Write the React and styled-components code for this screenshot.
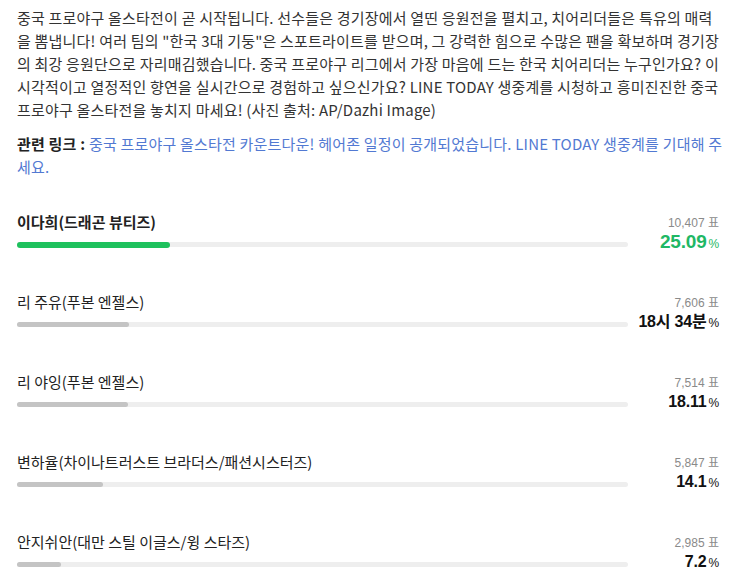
import React from "react";
import styled, { createGlobalStyle } from "styled-components";

const Global = createGlobalStyle`
  html, body { margin: 0; padding: 0; background: #fff; }
  body { font-family: "Noto Sans CJK KR", "Noto Sans", sans-serif; color: #222; }
`;

const Page = styled.div`
  width: 733px;
  box-sizing: border-box;
  padding: 6px 14px 0 17px;
`;

const Para = styled.p`
  margin: 0;
  font-size: 15px;
  line-height: 23px;
  color: #333;
  letter-spacing: 0.2px;
`;

const Line = styled.span`
  display: block;
  white-space: nowrap;
`;

const LinkPara = styled(Para)`
  margin-top: 11px;
`;

const LinkLabel = styled.b`
  font-weight: 700;
  color: #222;
`;

const LinkText = styled.a`
  color: #5279d2;
  text-decoration: none;
`;

const Poll = styled.div`
  margin-top: 33px;
  display: flex;
  flex-direction: column;
  gap: 42px;
`;

const Row = styled.div`
  display: grid;
  grid-template-columns: 611px 1fr;
  align-items: end;
`;

const Left = styled.div`
  display: flex;
  flex-direction: column;
  gap: 9px;
`;

const Name = styled.div`
  font-size: 15px;
  line-height: 22px;
  font-weight: ${(p) => (p.$top ? 700 : 400)};
  color: #222;
`;

const Track = styled.div`
  height: 5px;
  background: #eeeeee;
  border-radius: 3px;
  margin-bottom: 2px;
`;

const Fill = styled.div`
  height: ${(p) => (p.$top ? 6 : 5)}px;
  margin-top: ${(p) => (p.$top ? -0.5 : 0)}px;
  background: ${(p) => (p.$top ? "#1ec15d" : "#c4c4c4")};
  border-radius: 3px;
`;

const Right = styled.div`
  display: flex;
  flex-direction: column;
  align-items: flex-end;
  margin-bottom: -3px;
`;

const Count = styled.div`
  font-size: 12px;
  line-height: 16px;
  height: 16px;
  color: #8a8a8a;
  font-family: "Liberation Sans", "Noto Sans CJK KR", sans-serif;
`;

const Percent = styled.div`
  font-size: ${(p) => (p.$top ? 19 : 16)}px;
  line-height: 21px;
  height: 21px;
  font-weight: 700;
  color: ${(p) => (p.$top ? "#1fb865" : "#111")};
  font-family: "Liberation Sans", "Noto Sans CJK KR", sans-serif;
  letter-spacing: -0.2px;
  display: flex;
  align-items: baseline;
`;

const Unit = styled.span`
  font-size: 12px;
  font-weight: 400;
  margin-left: 2px;
`;

const bodyLines = [
  "중국 프로야구 올스타전이 곧 시작됩니다. 선수들은 경기장에서 열띤 응원전을 펼치고, 치어리더들은 특유의 매력",
  "을 뽐냅니다! 여러 팀의 \"한국 3대 기둥\"은 스포트라이트를 받으며, 그 강력한 힘으로 수많은 팬을 확보하며 경기장",
  "의 최강 응원단으로 자리매김했습니다. 중국 프로야구 리그에서 가장 마음에 드는 한국 치어리더는 누구인가요? 이",
  "시각적이고 열정적인 향연을 실시간으로 경험하고 싶으신가요? LINE TODAY 생중계를 시청하고 흥미진진한 중국",
  "프로야구 올스타전을 놓치지 마세요! (사진 출처: AP/Dazhi Image)",
];

const items = [
  { name: "이다희(드래곤 뷰티즈)", count: "10,407", pct: "25.09", w: 25.09, top: true },
  { name: "리 주유(푸본 엔젤스)", count: "7,606", pct: "18시 34분", w: 18.34 },
  { name: "리 야잉(푸본 엔젤스)", count: "7,514", pct: "18.11", w: 18.11 },
  { name: "변하율(차이나트러스트 브라더스/패션시스터즈)", count: "5,847", pct: "14.1", w: 14.1 },
  { name: "안지쉬안(대만 스틸 이글스/윙 스타즈)", count: "2,985", pct: "7.2", w: 7.2 },
];

export default function App() {
  return (
    <Page>
      <Global />
      <Para>
        {bodyLines.map((l) => (
          <Line key={l}>{l}</Line>
        ))}
      </Para>
      <LinkPara>
        <Line>
          <LinkLabel>관련 링크 : </LinkLabel>
          <LinkText href="#">
            중국 프로야구 올스타전 카운트다운! 헤어존 일정이 공개되었습니다. LINE TODAY 생중계를 기대해 주
          </LinkText>
        </Line>
        <Line>
          <LinkText href="#">세요.</LinkText>
        </Line>
      </LinkPara>
      <Poll>
        {items.map((it) => (
          <Row key={it.name}>
            <Left>
              <Name $top={it.top}>{it.name}</Name>
              <Track>
                <Fill $top={it.top} style={{ width: `${it.w}%` }} />
              </Track>
            </Left>
            <Right>
              <Count>{it.count} 표</Count>
              <Percent $top={it.top}>
                {it.pct}
                <Unit>%</Unit>
              </Percent>
            </Right>
          </Row>
        ))}
      </Poll>
    </Page>
  );
}
